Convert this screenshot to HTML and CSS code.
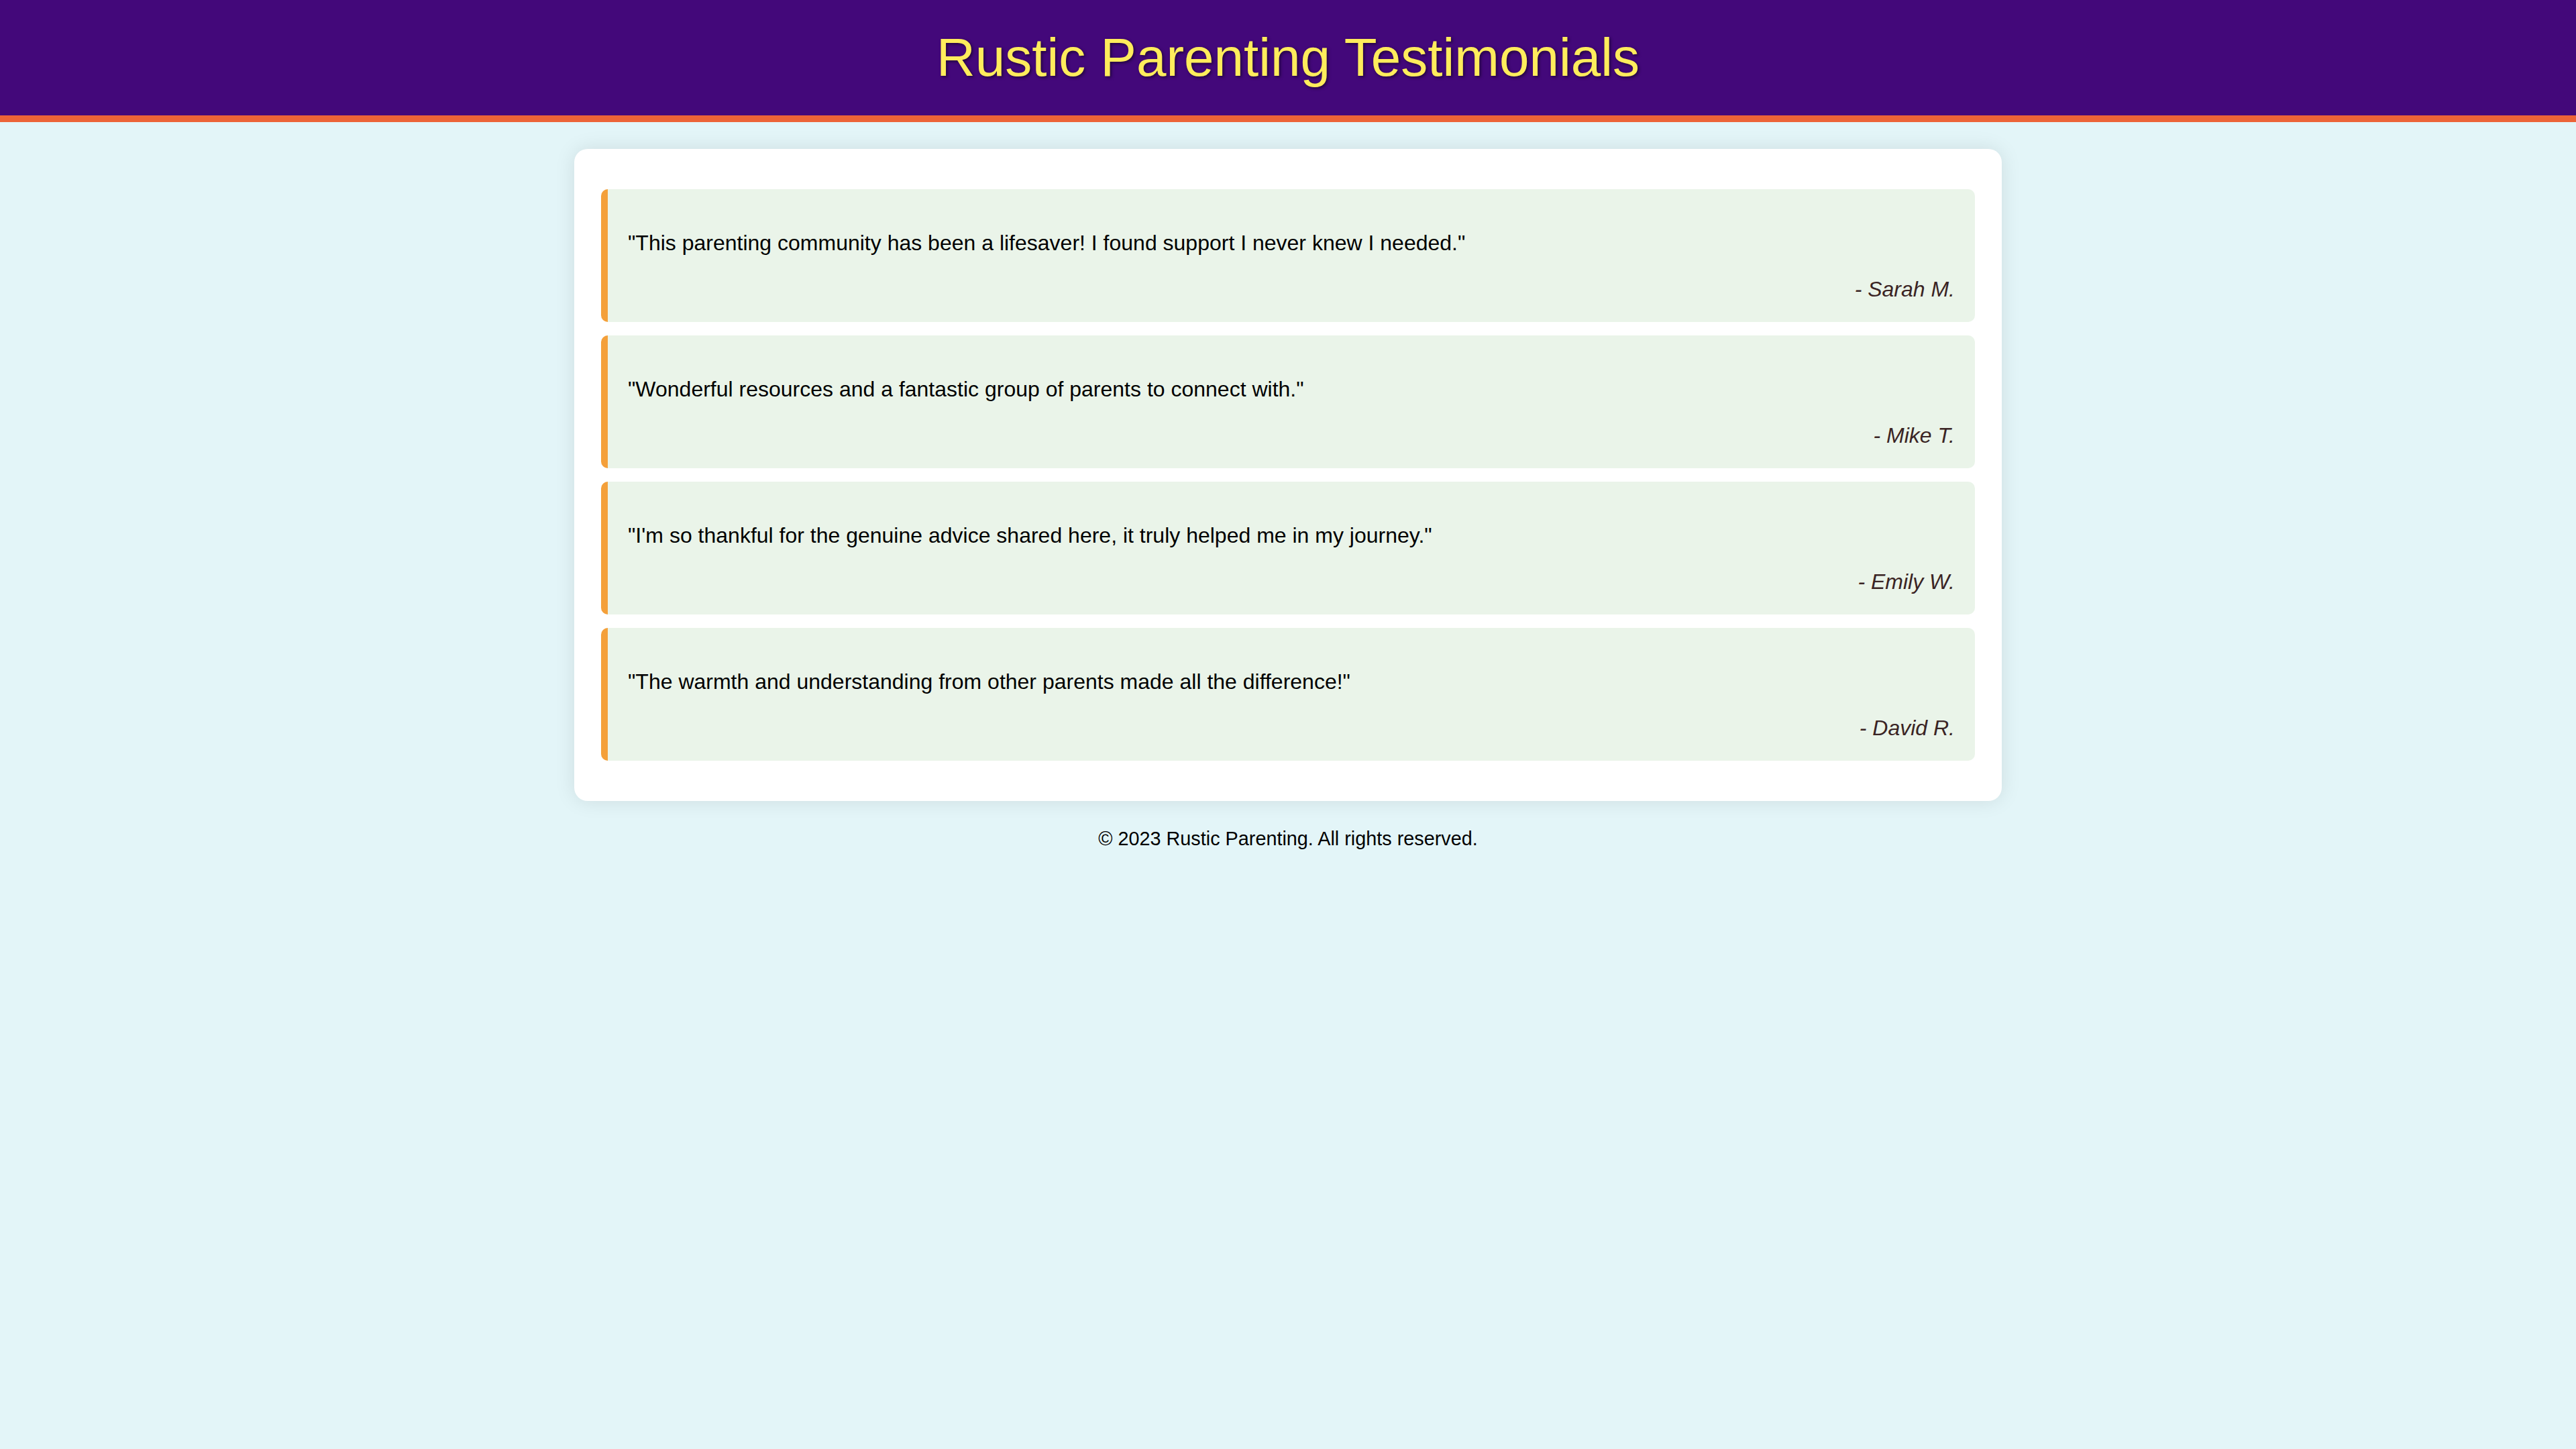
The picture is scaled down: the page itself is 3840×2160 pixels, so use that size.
FILE: index.html
```html
<!DOCTYPE html>
<html lang="en">
<head>
<meta charset="UTF-8">
<title>Rustic Parenting Testimonials</title>
<link rel="stylesheet" href="styles.css">
</head>
<body>
<header class="site-header">
  <h1 class="title">Rustic Parenting Testimonials</h1>
</header>
<main class="container">
  <div class="testimonial">
    <p class="quote">"This parenting community has been a lifesaver! I found support I never knew I needed."</p>
    <div class="author">- Sarah M.</div>
  </div>
  <div class="testimonial">
    <p class="quote">"Wonderful resources and a fantastic group of parents to connect with."</p>
    <div class="author">- Mike T.</div>
  </div>
  <div class="testimonial">
    <p class="quote">"I'm so thankful for the genuine advice shared here, it truly helped me in my journey."</p>
    <div class="author">- Emily W.</div>
  </div>
  <div class="testimonial">
    <p class="quote">"The warmth and understanding from other parents made all the difference!"</p>
    <div class="author">- David R.</div>
  </div>
</main>
<footer class="site-footer">&copy; 2023 Rustic Parenting. All rights reserved.</footer>
</body>
</html>
```
FILE: styles.css
```css
html, body {
  margin: 0;
  padding: 0;
}
body {
  font-family: "Liberation Sans", Arial, sans-serif;
  font-size: 32px;
  background: #e3f5f8;
  color: #000;
}
.site-header {
  background: #43087a;
  border-bottom: 10px solid #ec6337;
  padding: 40px 0;
  text-align: center;
}
.title {
  margin: 0;
  font-size: 80px;
  font-weight: normal;
  color: #ffec5c;
  text-shadow: 2px 2px 4px rgba(0, 0, 0, 0.5);
}
.container {
  max-width: 2048px;
  margin: 40px auto;
  padding: 40px;
  background: #fff;
  border-radius: 20px;
  box-shadow: 0 0 30px rgba(0, 0, 0, 0.1);
}
.testimonial {
  background: #eaf4e9;
  border-left: 10px solid #f4a03a;
  border-radius: 10px;
  padding: 30px;
  margin: 20px 0;
}
.quote {
  margin: 32px 0;
}
.author {
  text-align: right;
  font-style: italic;
  color: #3a2424;
}
.site-footer {
  text-align: center;
  font-size: 28.8px;
}
```
